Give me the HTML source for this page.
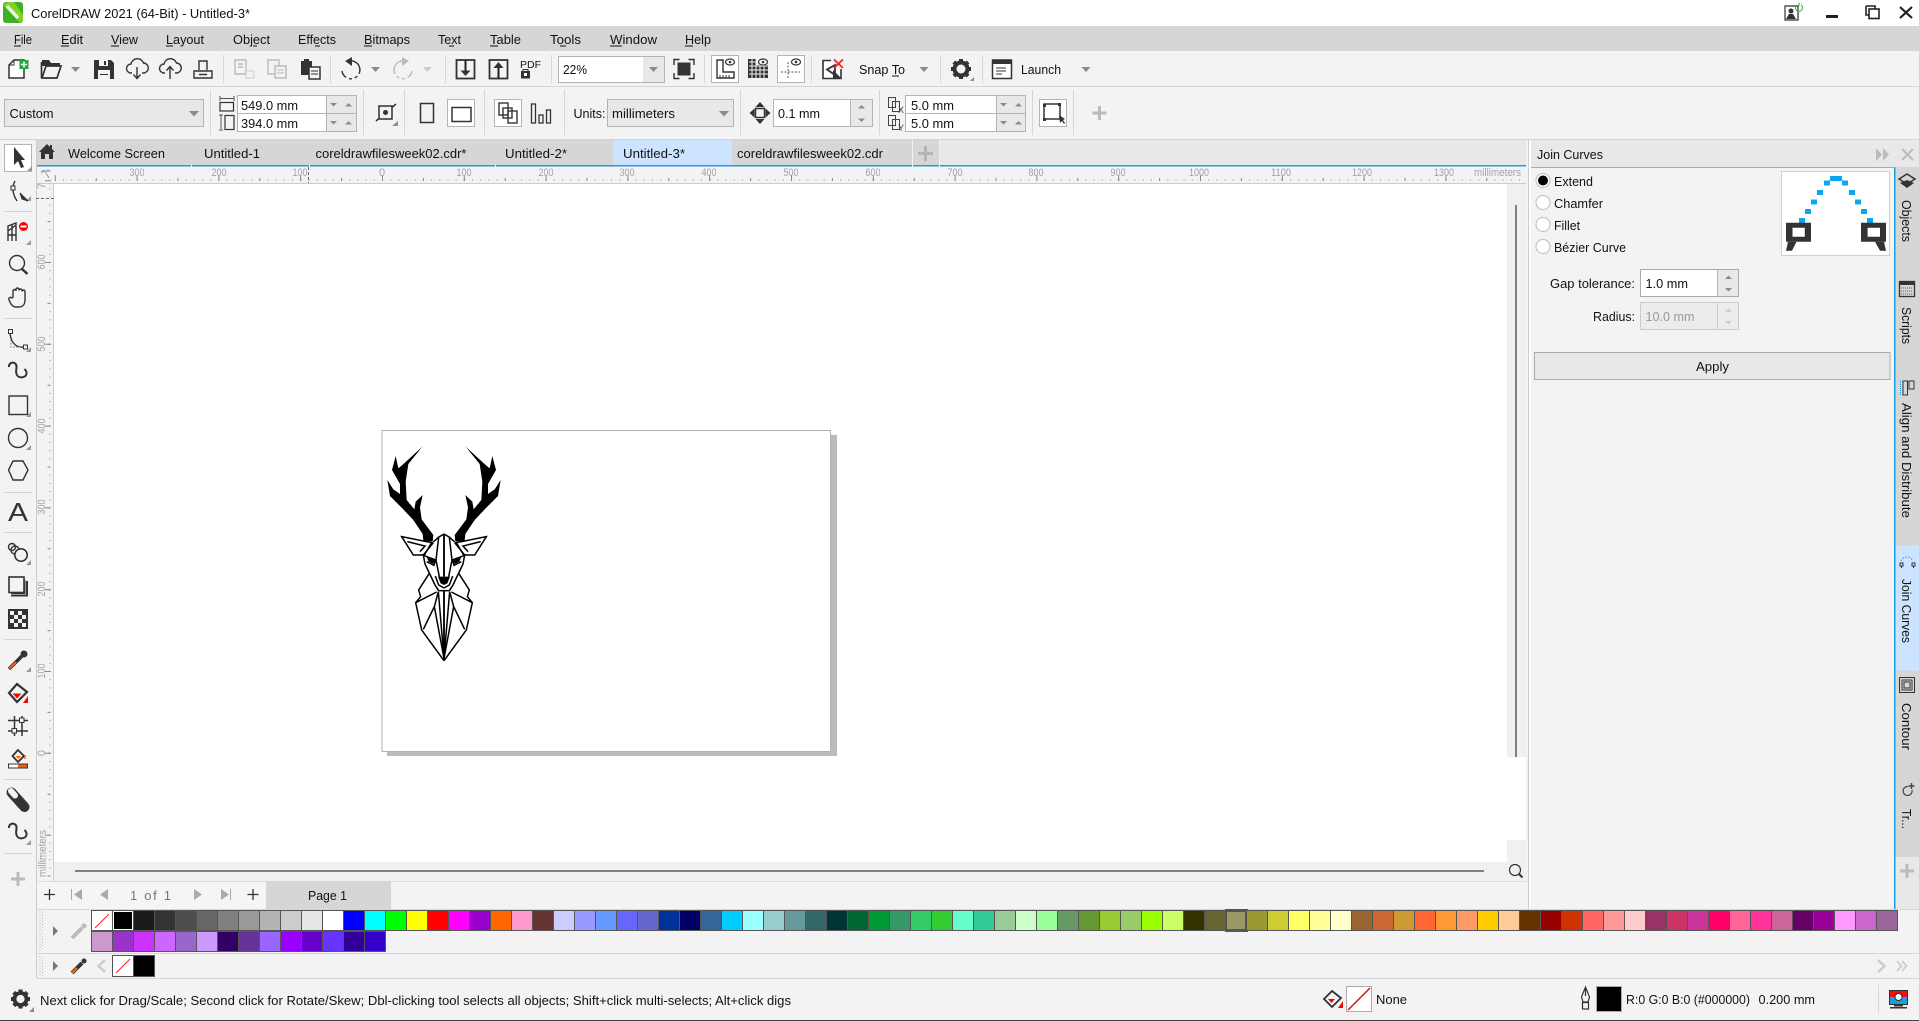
<!DOCTYPE html>
<html lang="en"><head><meta charset="utf-8"><title>CorelDRAW 2021</title>
<style>
html,body{margin:0;padding:0;background:#f3f3f3;width:1919px;height:1021px;overflow:hidden}
svg.m{position:absolute;left:0;top:0}
svg.m text{font-family:"Liberation Sans",sans-serif;font-size:13px;fill:#111}
svg.m text.r{font-size:11px;fill:#a3a3a3}
.pal{position:absolute;display:flex;border-left:1px solid #555;box-sizing:content-box}
.pal i{display:block;width:21px;height:21px;box-sizing:border-box;border:solid #555;border-width:1px 1px 1px 0;flex:none}
.s{fill:none;stroke:#333;stroke-width:1.4}
.sg{fill:none;stroke:#bbb;stroke-width:1.4}
.d{fill:#333}
.c{fill:#e8e8e8;stroke:#b4b4b4}
.w{fill:#fff;stroke:#b4b4b4}
.a{fill:#8a8a8a}
</style></head><body>
<svg class="m" width="1919" height="1021" viewBox="0 0 1919 1021" xmlns="http://www.w3.org/2000/svg">
<!-- base bands -->
<rect width="1919" height="1021" fill="#f3f3f3"/>
<rect width="1919" height="26" fill="#fff"/>
<rect y="26" width="1919" height="25" fill="#d6d6d6"/>
<rect y="86" width="1919" height="1" fill="#d6d6d6"/>
<rect y="139" width="1919" height="1" fill="#d6d6d6"/>
<rect y="1020" width="1919" height="1" fill="#444"/>

<!-- title bar -->
<rect x="3" y="2" width="20" height="21" rx="3" fill="#3fae2a"/>
<path d="M3 5 L8 2 H14 L23 15 V20 L20 23Z" fill="#7ed321"/>
<path d="M7 6 L18 18" stroke="#e8f5e0" stroke-width="3.5" fill="none"/>
<text x="31" y="18" textLength="219" lengthAdjust="spacingAndGlyphs">CorelDRAW 2021 (64-Bit) - Untitled-3*</text>
<path d="M1785 6 h13 v14 h-13z" fill="#fff" stroke="#333" stroke-width="1.200"/>
<circle cx="1791" cy="11" r="2.500" fill="#333"/><path d="M1786 19 l3 -5 h4 l3 5z" fill="#333"/>
<path d="M1797 5 a3.500 3.500 0 1 0 4 0 M1799 2.500 v3.500" fill="none" stroke="#2cab4a" stroke-width="1"/>
<rect x="1826" y="15" width="12" height="3" fill="#222"/>
<path d="M1866 6 h9 v3 M1866 6 v9 h3" fill="none" stroke="#222" stroke-width="1.600"/>
<rect x="1869" y="9" width="10" height="9.500" fill="#fff" stroke="#222" stroke-width="1.600"/>
<path d="M1900 7 L1912 18 M1912 7 L1900 18" stroke="#222" stroke-width="2.200" fill="none"/>

<!-- menu -->
<text x="14" y="44" textLength="18" lengthAdjust="spacingAndGlyphs">File</text>
<text x="61" y="44" textLength="22" lengthAdjust="spacingAndGlyphs">Edit</text>
<text x="111" y="44" textLength="27" lengthAdjust="spacingAndGlyphs">View</text>
<text x="166" y="44" textLength="38" lengthAdjust="spacingAndGlyphs">Layout</text>
<text x="233" y="44" textLength="37" lengthAdjust="spacingAndGlyphs">Object</text>
<text x="298" y="44" textLength="38" lengthAdjust="spacingAndGlyphs">Effects</text>
<text x="364" y="44" textLength="46" lengthAdjust="spacingAndGlyphs">Bitmaps</text>
<text x="438" y="44" textLength="23" lengthAdjust="spacingAndGlyphs">Text</text>
<text x="490" y="44" textLength="31" lengthAdjust="spacingAndGlyphs">Table</text>
<text x="550" y="44" textLength="31" lengthAdjust="spacingAndGlyphs">Tools</text>
<text x="610" y="44" textLength="47" lengthAdjust="spacingAndGlyphs">Window</text>
<text x="685" y="44" textLength="26" lengthAdjust="spacingAndGlyphs">Help</text>
<path d="M14 46h7M61 46h8M111 46h8M166 46h7M253 46h4M315 46h5M364 46h8M449 46h5M490 46h8M560 46h6M610 46h12M685 46h8" stroke="#111" stroke-width="1" fill="none"/>

<!-- main toolbar separators -->
<path d="M223.500 55v28M330.500 55v28M445.500 55v28M551.500 55v28M704.500 55v28M811.500 55v28M940.500 55v28M982.500 55v28" stroke="#d6d6d6" fill="none"/>
<!-- new -->
<path d="M9 78 V65 L14 60 H24 V78Z" fill="#fff" stroke="#333" stroke-width="1.500"/>
<path d="M9 65 h5 v-5" fill="none" stroke="#333"/>
<rect x="19.500" y="60" width="9" height="9" fill="#1fa83a"/><path d="M24 61.500v6M21 64.500h6" stroke="#fff" stroke-width="1.500"/>
<!-- open -->
<path d="M42 60 h7 l2 3 h9 v3 h-18z" fill="#333"/>
<path d="M41.500 78 V62 M42 78 H57 L61 66 H46 L42 78Z" fill="#f3f3f3" stroke="#333" stroke-width="1.700"/>
<path d="M71 67h9l-4.500 5z" class="a"/>
<!-- save -->
<path d="M94 60 h17 l3 3 v16 h-20z" fill="#333"/><rect x="99" y="60" width="9" height="6" fill="#f3f3f3"/><rect x="104" y="61" width="2" height="4" fill="#333"/><rect x="98" y="70" width="12" height="9" fill="#f3f3f3"/><rect x="100" y="74" width="8" height="1" fill="#333"/>
<!-- clouds -->
<path d="M132 73 h-1 a4.500 4.500 0 0 1 0 -9 a6.500 6.500 0 0 1 12.500 -1 a5 5 0 0 1 -.5 10 h-1" class="s"/>
<path d="M137 67 v11 M133.500 74.500 L137 78.500 L140.500 74.500" class="s"/>
<path d="M165 73 h-1 a4.500 4.500 0 0 1 0 -9 a6.500 6.500 0 0 1 12.500 -1 a5 5 0 0 1 -.5 10 h-1" class="s"/>
<path d="M170 79 v-12 M166.500 70.500 L170 66.500 L173.500 70.500" class="s"/>
<!-- print -->
<path d="M199 70 V61 H207 V70 M194 71 H212 V78 H194Z M199 74.500h8" class="s"/>
<!-- copy family -->
<path d="M235 60 h11 v14 h-11z M238 64h5M238 67h5" class="sg"/><rect x="246" y="71" width="8" height="7" fill="#f3f3f3" stroke="#ccc"/>
<path d="M268 60 h11 v14 h-11z" class="sg"/><rect x="275" y="66" width="11" height="12" fill="#f3f3f3" stroke="#bbb" stroke-width="1.500"/><path d="M277 70h7M277 73h7" stroke="#bbb"/>
<rect x="301" y="61" width="11" height="14" fill="#333"/><rect x="304" y="59" width="5" height="3" fill="#333"/><rect x="309" y="67" width="11" height="12" fill="#f3f3f3" stroke="#333" stroke-width="1.500"/><path d="M311 71h7M311 74h7" stroke="#333"/>
<!-- undo redo -->
<path d="M349 61 a9 9 0 1 1 -7 10" class="s" stroke-dasharray="20 3 3 3 3 3"/><path d="M352 57 L345 61 L352 66z" class="d"/>
<path d="M371 67h9l-4.500 5z" class="a"/>
<path d="M405 61 a9 9 0 1 0 7 10" class="sg" stroke-dasharray="20 3 3 3 3 3"/><path d="M402 57 L409 61 L402 66z" fill="#bbb"/>
<path d="M423 67h9l-4.500 5z" fill="#ccc"/>
<!-- import export pdf -->
<rect x="456.500" y="60" width="18" height="18.500" class="s" style="stroke-width:1.800"/><path d="M465.500 60v14" stroke="#222" stroke-width="2"/><path d="M460.500 70.500h10L465.500 76z" class="d"/>
<rect x="489.500" y="60" width="18" height="18.500" class="s" style="stroke-width:1.800"/><path d="M498.500 78v-13" stroke="#222" stroke-width="2"/><path d="M493.500 68h10L498.500 62z" class="d"/>
<text x="520" y="68" textLength="21" lengthAdjust="spacingAndGlyphs" style="font-size:10px">PDF</text>
<rect x="521" y="71" width="9" height="7.500" fill="#333"/><path d="M523 71 v-1.500 h5 v1.500" class="s" style="stroke-width:1"/><rect x="524" y="73" width="3" height="3" fill="#fff"/>
<!-- zoom combo -->
<rect x="558.500" y="56.500" width="106" height="26" fill="#e8e8e8" stroke="#b4b4b4"/><rect x="559" y="57" width="84" height="25" fill="#fff"/>
<text x="563" y="74" textLength="24" lengthAdjust="spacingAndGlyphs">22%</text>
<path d="M649 67h9l-4.500 5z" class="a"/>
<!-- fullscreen -->
<rect x="677.500" y="62.500" width="13" height="13" fill="#333"/>
<path d="M674 65 v-5.500 h5.500 M688.500 59.500 h5.500 v5.500 M694 73 v5.500 h-5.500 M679.500 78.500 h-5.500 v-5.500" class="s"/>
<!-- rulers toggle -->
<rect x="711.500" y="55.500" width="27" height="27" fill="#fff" stroke="#b4b4b4"/>
<path d="M717 60 v18 h17 v-6 h-11 v-12z" class="s"/><path d="M720 78v-3M723 78v-3M726 78v-3M729 78v-3" stroke="#333"/>
<ellipse cx="730" cy="62" rx="4.500" ry="3" fill="#fff" stroke="#333" stroke-width="1.200"/><circle cx="730" cy="62" r="1.300" class="d"/>
<!-- grid -->
<path d="M748 59 h8 v6 h12 v13 h-20z" fill="#333"/><path d="M749 62h19M749 66h19M749 70h19M749 74h19M752 59v19M756 59v19M760 65v13M764 65v13" stroke="#f3f3f3"/>
<ellipse cx="763" cy="62" rx="4.500" ry="3" fill="#fff" stroke="#333" stroke-width="1.200"/><circle cx="763" cy="62" r="1.300" class="d"/>
<!-- guides -->
<rect x="777.500" y="55.500" width="27" height="27" fill="#fff" stroke="#b4b4b4"/>
<path d="M788 62 v17 M781 72 h19" stroke="#555" stroke-dasharray="2 1.500" fill="none"/>
<ellipse cx="796" cy="62" rx="4.500" ry="3" fill="#fff" stroke="#333" stroke-width="1.200"/><circle cx="796" cy="62" r="1.300" class="d"/>
<!-- snap -->
<path d="M831 60.500 H823 V78.500 H841 V69" fill="#fff" stroke="#333" stroke-width="1.600"/>
<path d="M827 69.500 L835 65 V75z" fill="#f3f3f3" stroke="#333" stroke-width="1.800"/><path d="M833 70 L841 78 H833z" class="d"/>
<path d="M834 59.500 L843 68 M843 59.500 L834 68" stroke="#e22" stroke-width="1.800"/>
<text x="859" y="74" textLength="46" lengthAdjust="spacingAndGlyphs">Snap To</text><path d="M892 76h7" stroke="#111"/>
<path d="M919.500 67h9l-4.500 5z" class="a"/>
<!-- gear -->
<g transform="translate(961,69)"><circle r="6.500" fill="none" stroke="#333" stroke-width="4"/><path d="M-2 -10h4v3h-4zM-2 7h4v3h-4zM-10 -2h3v4h-3zM7 -2h3v4h-3z" class="d"/><path d="M-2 -10h4v3h-4zM-2 7h4v3h-4zM-10 -2h3v4h-3zM7 -2h3v4h-3z" class="d" transform="rotate(45)"/></g>
<path d="M974 81h-4l4-4z" class="a"/>
<!-- launch -->
<rect x="992.500" y="60" width="19" height="18.500" fill="#fff" stroke="#333" stroke-width="1.500"/><rect x="992" y="60" width="20" height="4" fill="#333"/><path d="M996 68h10M996 71h10M996 74h6" stroke="#333"/>
<text x="1021" y="74" textLength="40" lengthAdjust="spacingAndGlyphs">Launch</text>
<path d="M1081.500 67h9l-4.500 5z" class="a"/>

<!-- property bar -->
<path d="M210.500 90v45M363.500 90v45M404.500 90v45M484.500 90v45M564.500 90v45M740.500 90v45M879.500 90v45M1032.500 90v45M1073.500 90v45" stroke="#d6d6d6" fill="none"/>
<rect x="4.500" y="99.500" width="199" height="27" class="c"/>
<text x="9.500" y="118" textLength="44" lengthAdjust="spacingAndGlyphs">Custom</text>
<path d="M189 111h10l-5 5.500z" class="a"/>
<!-- W H icons -->
<path d="M220 98.500h14M220 96v5M234 96v5" stroke="#555" fill="none"/><rect x="220" y="102.500" width="13.500" height="8.500" fill="none" stroke="#333" stroke-width="1.200"/>
<path d="M221 115v14M219 115h4M219 130h4" stroke="#555" fill="none"/><rect x="225" y="115.500" width="9" height="14" fill="none" stroke="#333" stroke-width="1.200"/>
<rect x="237.500" y="95.500" width="119" height="18" class="c"/><rect x="238" y="96" width="88.500" height="17" fill="#fff"/>
<rect x="237.500" y="113.500" width="119" height="18" class="c"/><rect x="238" y="114" width="88.500" height="17" fill="#fff"/>
<path d="M326.500 96v36" stroke="#b4b4b4" fill="none"/>
<text x="241" y="110" textLength="57" lengthAdjust="spacingAndGlyphs">549.0 mm</text>
<text x="241" y="128" textLength="57" lengthAdjust="spacingAndGlyphs">394.0 mm</text>
<path d="M330 103h7l-3.500 3.500zM345 106.500h7l-3.500-3.500zM330 121h7l-3.500 3.500zM345 124.500h7l-3.500-3.500z" class="a"/>
<!-- unit icon -->
<path d="M376 121 L396 104" stroke="#333" stroke-width="1.500"/><rect x="379" y="106" width="13" height="13" fill="#f3f3f3" stroke="#333" stroke-width="1.500"/><circle cx="385.500" cy="112.500" r="2.500" class="d"/><path d="M398 126h-6l6-5z" class="a"/>
<rect x="420.500" y="103.500" width="13" height="19" fill="none" stroke="#333" stroke-width="1.500"/>
<rect x="447.500" y="99.500" width="27" height="27" fill="#fff" stroke="#b4b4b4"/><rect x="452" y="107.500" width="19" height="14" fill="none" stroke="#333" stroke-width="1.500"/>
<rect x="494.500" y="99.500" width="27" height="27" fill="#fff" stroke="#b4b4b4"/>
<rect x="499" y="103" width="9" height="12" fill="none" stroke="#333" stroke-width="1.400"/><rect x="508" y="111" width="9" height="12" fill="none" stroke="#333" stroke-width="1.400"/><rect x="503" y="108" width="9" height="10" fill="none" stroke="#333" stroke-width="1.400"/>
<rect x="531.500" y="104" width="4" height="19" fill="none" stroke="#333" stroke-width="1.300"/><rect x="539" y="115" width="4" height="8" fill="none" stroke="#333" stroke-width="1.300"/><rect x="546.500" y="110" width="4" height="13" fill="none" stroke="#333" stroke-width="1.300"/>
<text x="573.500" y="118" textLength="32" lengthAdjust="spacingAndGlyphs">Units:</text>
<rect x="607.500" y="99.500" width="126" height="27" class="c"/>
<text x="612" y="118" textLength="63" lengthAdjust="spacingAndGlyphs">millimeters</text>
<path d="M719 111h10l-5 5.500z" class="a"/>
<!-- nudge -->
<path d="M760 102l4.500 5h-9zM760 124l4.500-5h-9zM749.500 113l5-4.500v9zM770.500 113l-5-4.500v9z" class="d"/><rect x="755.500" y="108.500" width="9" height="9" fill="#f3f3f3" stroke="#333" stroke-width="1.500"/>
<rect x="773.500" y="99.500" width="99" height="27" class="c"/><rect x="774" y="100" width="76.500" height="26" fill="#fff"/><path d="M850.500 100v26" stroke="#b4b4b4"/>
<text x="778" y="118" textLength="42" lengthAdjust="spacingAndGlyphs">0.1 mm</text>
<path d="M858 108.500h7l-3.500-3.500zM858 118.500h7l-3.500 3.500z" class="a"/>
<!-- dup -->
<g fill="none" stroke="#444" stroke-width="1"><rect x="888.500" y="97.500" width="7" height="10"/><rect x="892.500" y="101.500" width="7" height="10"/><rect x="888.500" y="115.500" width="7" height="10"/><rect x="892.500" y="119.500" width="7" height="10"/></g>
<text x="898" y="113" style="font-size:9px;fill:#444">X</text><text x="898" y="131" style="font-size:9px;fill:#444">Y</text>
<rect x="905.500" y="95.500" width="120" height="18" class="c"/><rect x="906" y="96" width="90" height="17" fill="#fff"/>
<rect x="905.500" y="113.500" width="120" height="18" class="c"/><rect x="906" y="114" width="90" height="17" fill="#fff"/>
<path d="M996.500 96v36" stroke="#b4b4b4"/>
<text x="911" y="110" textLength="43" lengthAdjust="spacingAndGlyphs">5.0 mm</text>
<text x="911" y="128" textLength="43" lengthAdjust="spacingAndGlyphs">5.0 mm</text>
<path d="M1000 103h7l-3.500 3.500zM1015 106.500h7l-3.500-3.500zM1000 121h7l-3.500 3.500zM1015 124.500h7l-3.500-3.500z" class="a"/>
<rect x="1039.500" y="99.500" width="27" height="27" fill="#fff" stroke="#b4b4b4"/>
<rect x="1044" y="104" width="16" height="15" fill="none" stroke="#333" stroke-width="1.500"/><path d="M1043 104h3v3h-3zM1058 103h3v3h-3zM1043 118h3v3h-3z" class="d"/><path d="M1059 115l1 8 2-2 2 3 1-1-2-3 2-1z" class="d"/>
<path d="M1099.500 106v14M1092.500 113h14" stroke="#bbb" stroke-width="3"/>

<!-- tabs -->
<rect x="36" y="140" width="903" height="25" fill="#d6d6d6"/>
<rect x="939" y="140" width="587" height="25" fill="#e8e8e8"/>
<rect x="613" y="140" width="119" height="25" fill="#cce4ff"/>
<rect x="36" y="165" width="1490" height="1.500" fill="#1a9fe0"/>
<path d="M191.500 165v2M309.500 165v2M495.500 165v2M912.500 140v27M939.500 140v27" stroke="#f3f3f3" fill="none"/>
<path d="M47 144 L39 152 H41 V159 H45 V154 H49 V159 H53 V152 H55 L52 149 V145 H50 V147z" fill="#333"/>
<text x="68" y="158" textLength="97" lengthAdjust="spacingAndGlyphs">Welcome Screen</text>
<text x="204" y="158" textLength="56" lengthAdjust="spacingAndGlyphs">Untitled-1</text>
<text x="315.500" y="158" textLength="151" lengthAdjust="spacingAndGlyphs">coreldrawfilesweek02.cdr*</text>
<text x="505" y="158" textLength="62" lengthAdjust="spacingAndGlyphs">Untitled-2*</text>
<text x="623" y="158" textLength="62" lengthAdjust="spacingAndGlyphs">Untitled-3*</text>
<text x="737" y="158" textLength="146" lengthAdjust="spacingAndGlyphs">coreldrawfilesweek02.cdr</text>
<path d="M925.500 146v15M918 153.500h15" stroke="#b4b4b4" stroke-width="3"/>

<!-- ruler + canvas -->
<rect x="36" y="166.500" width="1490" height="16.500" fill="#f3f3f3"/>
<rect x="36" y="183" width="1490" height="1" fill="#ccc"/>
<rect x="54" y="184" width="1472" height="697" fill="#fff"/>
<rect x="36" y="140" width="1" height="838" fill="#ccc"/>
<rect x="53" y="183" width="1" height="698" fill="#ccc"/>
<g fill="none" stroke="#8a8a8a">
<line x1="54.800" y1="180" x2="1526" y2="180" stroke-dasharray="1 7.180"/>
<line x1="95.700" y1="179.500" x2="1526" y2="179.500" stroke-width="3" stroke-dasharray="1 39.900"/>
<line x1="54.800" y1="178" x2="1526" y2="178" stroke-width="6" stroke-dasharray="1 80.800"/>
<line x1="50" y1="180.200" x2="50" y2="881" stroke-dasharray="1 7.180" stroke-dashoffset="0"/>
<line x1="49" y1="221.100" x2="49" y2="881" stroke-width="3" stroke-dasharray="1 39.900"/>
<line x1="48" y1="180.200" x2="48" y2="881" stroke-width="6" stroke-dasharray="1 80.800"/>
</g>
<path d="M308.500 167v16" stroke="#666" stroke-dasharray="3 2" fill="none"/>
<path d="M36 198.500h18" stroke="#666" stroke-dasharray="3 2" fill="none"/>
<path d="M41 171h10M44 170l5 8M43 170v2M41 173l3-2M48 169v3" stroke="#999" fill="none"/>
<g text-anchor="middle">
<text class="r" x="137" y="176" textLength="15" lengthAdjust="spacingAndGlyphs">300</text>
<text class="r" x="219" y="176" textLength="15" lengthAdjust="spacingAndGlyphs">200</text>
<text class="r" x="300" y="176" textLength="15" lengthAdjust="spacingAndGlyphs">100</text>
<text class="r" x="382" y="176">0</text>
<text class="r" x="464" y="176" textLength="15" lengthAdjust="spacingAndGlyphs">100</text>
<text class="r" x="546" y="176" textLength="15" lengthAdjust="spacingAndGlyphs">200</text>
<text class="r" x="627" y="176" textLength="15" lengthAdjust="spacingAndGlyphs">300</text>
<text class="r" x="709" y="176" textLength="15" lengthAdjust="spacingAndGlyphs">400</text>
<text class="r" x="791" y="176" textLength="15" lengthAdjust="spacingAndGlyphs">500</text>
<text class="r" x="873" y="176" textLength="15" lengthAdjust="spacingAndGlyphs">600</text>
<text class="r" x="955" y="176" textLength="15" lengthAdjust="spacingAndGlyphs">700</text>
<text class="r" x="1036" y="176" textLength="15" lengthAdjust="spacingAndGlyphs">800</text>
<text class="r" x="1118" y="176" textLength="15" lengthAdjust="spacingAndGlyphs">900</text>
<text class="r" x="1199" y="176" textLength="20" lengthAdjust="spacingAndGlyphs">1000</text>
<text class="r" x="1281" y="176" textLength="20" lengthAdjust="spacingAndGlyphs">1100</text>
<text class="r" x="1362" y="176" textLength="20" lengthAdjust="spacingAndGlyphs">1200</text>
<text class="r" x="1444" y="176" textLength="20" lengthAdjust="spacingAndGlyphs">1300</text>
<text class="r" transform="translate(45,262) rotate(-90)" textLength="15" lengthAdjust="spacingAndGlyphs">600</text>
<text class="r" transform="translate(45,344) rotate(-90)" textLength="15" lengthAdjust="spacingAndGlyphs">500</text>
<text class="r" transform="translate(45,426) rotate(-90)" textLength="15" lengthAdjust="spacingAndGlyphs">400</text>
<text class="r" transform="translate(45,507) rotate(-90)" textLength="15" lengthAdjust="spacingAndGlyphs">300</text>
<text class="r" transform="translate(45,589) rotate(-90)" textLength="15" lengthAdjust="spacingAndGlyphs">200</text>
<text class="r" transform="translate(45,671) rotate(-90)" textLength="15" lengthAdjust="spacingAndGlyphs">100</text>
<text class="r" transform="translate(45,753) rotate(-90)">0</text>
</g>
<text class="r" transform="translate(45,189) rotate(-90)">7</text>
<text class="r" x="1474" y="176" textLength="47" lengthAdjust="spacingAndGlyphs">millimeters</text>
<text class="r" transform="translate(46,877) rotate(-90)" textLength="47" lengthAdjust="spacingAndGlyphs">millimeters</text>

<!-- scrollbars -->
<rect x="1507" y="184" width="19" height="573" fill="#f0f0f0"/>
<rect x="1515" y="205" width="2" height="552" fill="#808080"/>
<rect x="1507" y="840" width="19" height="41" fill="#f0f0f0"/>
<rect x="54" y="862" width="1453" height="19" fill="#f0f0f0"/>
<rect x="75" y="870" width="1409" height="2" fill="#808080"/>
<circle cx="1515" cy="870" r="5.500" fill="#f3f3f3" stroke="#333" stroke-width="1.200"/><path d="M1513 868h.1M1517 868h.1M1515 870h.1M1513 872h.1M1517 872h.1" stroke="#333" stroke-width="1.500"/><path d="M1519 874l3.500 3.500" stroke="#333" stroke-width="2"/>
<!-- divider -->
<rect x="1526" y="140" width="2" height="769" fill="#f3f3f3"/>
<rect x="1528" y="140" width="1" height="769" fill="#ccc"/>
<rect x="1529" y="140" width="2" height="769" fill="#fff"/>

<!-- page -->
<rect x="387" y="435" width="450" height="321" fill="#bbb"/>
<rect x="382" y="430.500" width="448.500" height="321" fill="#fff" stroke="#b0b0b0"/>
<!-- deer -->
<g transform="translate(370,420) scale(.33333)">
<g id="h">
<path d="M157 80 L115 132 L107 185 L110 240 L133 268 L137 245 L158 225 L150 262 L155 298 L190 345 L188 365 L160 362 L158 342 L130 300 L100 268 L60 228 L52 180 L70 208 L90 222 L90 192 L66 150 L77 108 L85 145 L105 128Z" fill="#000"/>
<g fill="none" stroke="#000" stroke-width="4.500" stroke-linejoin="miter">
<path d="M95 350 L185 368 L163 405 L130 405Z"/>
<path d="M112 365 L165 378 L150 395"/>
<path d="M190 366 L205 352 L222 342"/>
<path d="M206 352 L198 420 L208 470"/>
<path d="M190 368 L160 405 L165 432 L195 495 L206 512"/>
<path d="M163 407 L197 420 L192 436 L170 425"/>
<path d="M196 468 L206 495 L222 504"/>
<path d="M206 512 H222"/>
<path d="M178 460 L146 510 L152 530 L137 548 L155 630 L222 722"/>
<path d="M137 548 L200 516"/>
<path d="M205 515 L222 715"/>
<path d="M160 628 L193 560 L222 715"/>
<path d="M193 560 L205 515"/>
</g>
<path d="M170 411 L195 422 L190 432 L176 425Z" fill="#000"/>
</g>
<use href="#h" transform="matrix(-1 0 0 1 444 0)"/>
<path d="M222 344 V470 M222 510 V722" stroke="#000" stroke-width="5.500" fill="none"/>
<path d="M204 470 L240 470 L232 490 L222 495 L212 490Z" fill="#000"/>
</g>

<!-- tool column -->
<rect x="4.500" y="144.500" width="27" height="27" fill="#fff" stroke="#b4b4b4"/>
<path d="M14 147 L25 160 L21 160 L24 167 L21 168 L18 161 L14 165Z" fill="#333"/>
<g fill="#999"><path d="M32 171h-5l5-5z"/><path d="M31 201h-5l5-5z"/><path d="M31 245h-5l5-5z"/><path d="M31 352h-5l5-5z"/><path d="M31 417h-5l5-5z"/><path d="M31 450h-5l5-5z"/><path d="M31 565h-5l5-5z"/><path d="M31 672h-5l5-5z"/><path d="M31 845h-5l5-5z"/></g>
<path d="M4 211.500h28M4 318.500h28M4 492.500h28M4 532.500h28M4 639.500h28M4 779.500h28M4 853.500h28" stroke="#d6d6d6" fill="none"/>
<!-- shape -->
<path d="M15 181 Q10 190 17 201" class="s"/><rect x="11" y="186" width="4" height="4" fill="#f3f3f3" stroke="#333"/><path d="M20 193 L28 201 L22 199z" class="d" stroke="#333"/>
<!-- crop -->
<path d="M8 241 V226 L16 223 V241 M12 241 V225 M8 231 L16 225 M8 235h8" class="s"/><circle cx="23.500" cy="226.500" r="4.500" fill="#f00"/><rect x="20.500" y="225.500" width="6" height="2" fill="#fff"/>
<!-- zoom -->
<circle cx="17" cy="263" r="7.500" class="s"/><path d="M22 269 L27.500 274" stroke="#333" stroke-width="2.500"/>
<!-- hand -->
<path d="M13 297 v-6 a1.300 1.300 0 0 1 3 0 v-1.500 a1.300 1.300 0 0 1 3 0 v1 a1.300 1.300 0 0 1 3 0 v1 a1.300 1.300 0 0 1 3 0 V300 c0 4 -2 7 -6 7 h-3 c-3 0 -4 -2 -5 -3 l-2 -4 c-1 -3 2 -3 3 -2z" class="s"/>
<!-- curve -->
<path d="M10 333 C11 345 18 348 25 347" class="s"/><path d="M11 340 V347 H22" fill="none" stroke="#777" stroke-dasharray="1.500 1.500"/><rect x="8.500" y="329.500" width="4" height="4" fill="#f3f3f3" stroke="#333"/><rect x="23.500" y="345" width="4" height="4" fill="#f3f3f3" stroke="#333"/>
<!-- artistic -->
<path d="M9 367 a3.800 3.800 0 1 1 7.500 0 c0 3 -1 4 0 7 c1.500 5 9 4 10 0 c.5 -2 -1 -4 -2 -5" class="s" style="stroke-width:2"/>
<!-- rect ellipse poly -->
<rect x="9" y="396" width="18.500" height="18.500" class="s"/>
<circle cx="18" cy="438" r="9.500" class="s"/>
<path d="M13 461 H23 L28 470 L23 480 H13 L8.500 470Z" class="s"/>
<!-- A -->
<text x="8" y="521" style="font-size:26px;fill:#333" textLength="20" lengthAdjust="spacingAndGlyphs">A</text>
<!-- blend -->
<circle cx="12" cy="547" r="3.500" class="s"/><circle cx="15" cy="550" r="4" class="s"/><circle cx="21" cy="555" r="6.200" fill="#f3f3f3" stroke="#333" stroke-width="1.600"/>
<!-- shadow -->
<rect x="11" y="581" width="17" height="15.500" fill="#333"/><rect x="9" y="577" width="15" height="15.500" fill="#f3f3f3" stroke="#333" stroke-width="1.600"/><path d="M11 594.500h14.500v-15" stroke="#999" fill="none"/>
<!-- transparency -->
<rect x="8" y="609" width="20" height="20" fill="#333"/>
<g fill="#f3f3f3"><rect x="10" y="611" width="4" height="4"/><rect x="18" y="611" width="4" height="4"/><rect x="14" y="615" width="4" height="4"/><rect x="22" y="615" width="4" height="4"/><rect x="10" y="619" width="4" height="4"/><rect x="18" y="619" width="4" height="4"/><rect x="14" y="623" width="4" height="4"/><rect x="22" y="623" width="4" height="4"/></g>
<!-- dropper -->
<path d="M9 669 L22 656" stroke="#333" stroke-width="3.500"/><path d="M9.500 668.500 L16 662" stroke="#e8631a" stroke-width="2"/><circle cx="24" cy="654" r="3.500" class="d"/>
<!-- fill -->
<path d="M17 684 L9 693 L17 702 L27 692Z" fill="#f3f3f3" stroke="#333" stroke-width="2.200"/><path d="M12.500 693.500 h9 l-4.500 5z" fill="#f00"/><path d="M28 696 V703 H23z" fill="#f00"/>
<!-- mesh -->
<path d="M8 720.500h20M8 731h20M14.500 716v20M22 716v20" stroke="#333" stroke-width="1.500"/><rect x="19.500" y="718" width="4.500" height="4.500" fill="#f3f3f3" stroke="#333"/><rect x="12" y="728.500" width="4.500" height="4.500" fill="#f3f3f3" stroke="#333"/>
<!-- smart fill -->
<path d="M18 750 L12.500 756 L18 762 L24 756Z" fill="#f3f3f3" stroke="#333" stroke-width="1.800"/><path d="M15.500 756h5.500l-2.500 3z" fill="#f60"/><path d="M25 755v4" stroke="#f60" stroke-width="1.500"/>
<rect x="8.500" y="764" width="19" height="4" fill="#fff" stroke="#333"/><rect x="18" y="764.500" width="9" height="3" fill="#e8631a"/>
<!-- pill -->
<path d="M11.500 792.500 L24.500 807" stroke="#333" stroke-width="10" stroke-linecap="round"/><path d="M11 791 L15 795.500" stroke="#f3f3f3" stroke-width="6" stroke-linecap="round"/>
<!-- connector -->
<path d="M9 828 a3.800 3.800 0 1 1 7.500 0 c0 3 -1 4 0 7 c1.500 5 9 4 10 0 c.5 -2 -1 -4 -2 -5" class="s" style="stroke-width:2"/>
<path d="M18 872v14M11 879h14" stroke="#bbb" stroke-width="3"/>

<!-- page bar -->
<path d="M37 881.500h1490" stroke="#ddd" fill="none"/>
<rect x="37" y="882" width="229" height="27" fill="#f5f5f5"/>
<rect x="266" y="881" width="125" height="28" fill="#d6d6d6"/>
<path d="M49.500 889v11M44 894.500h11M253 889v11M247.500 894.500h11" stroke="#333" stroke-width="1.300"/>
<path d="M71.500 889v11" stroke="#aaa"/><path d="M82 889v11l-8-5.500z" fill="#aaa"/>
<path d="M108 889v11l-8-5.500z" fill="#aaa"/>
<path d="M194 889v11l8-5.500z" fill="#aaa"/>
<path d="M221 889v11l8-5.500z" fill="#aaa"/><path d="M230.500 889v11" stroke="#aaa"/>
<text x="130" y="900" textLength="41" lengthAdjust="spacing" style="fill:#777">1 of 1</text>
<text x="308" y="900" textLength="39" lengthAdjust="spacingAndGlyphs">Page 1</text>

<!-- palette chrome -->
<path d="M37 909.500h1882" stroke="#d6d6d6" fill="none"/>
<path d="M37 953.500h1882M37 978.500h1882" stroke="#d6d6d6" fill="none"/>
<path d="M40 911v40M42.500 912v39M40 956v20M42.500 957v19" stroke="#bbb" stroke-dasharray="1 2" fill="none"/>
<path d="M53 926v10l5-5zM53 961v10l5-5z" fill="#777"/>
<path d="M72 938 L82 928" stroke="#bbb" stroke-width="4"/><circle cx="84" cy="926" r="2.500" fill="#bbb"/>
<path d="M72 973 L82 963" stroke="#333" stroke-width="4"/><path d="M72 973 L77 968" stroke="#e8631a" stroke-width="2.500"/><circle cx="84" cy="961" r="2.500" class="d"/>
<path d="M105 960 L98.500 966 L105 972" fill="none" stroke="#ccc" stroke-width="2.500"/>
<path d="M1878 960 L1884.500 966 L1878 972" fill="none" stroke="#ccc" stroke-width="2.500"/>
<path d="M1897 961 L1901.500 966 L1897 971 M1902 961 L1906.500 966 L1902 971" fill="none" stroke="#ccc" stroke-width="1.700"/>
<rect x="112.500" y="955.500" width="21" height="21" fill="#fff" stroke="#555"/><path d="M116 973 L130 959" stroke="#f22"/>
<rect x="133.500" y="955.500" width="21" height="21" fill="#000" stroke="#555"/>

<!-- status bar -->
<g transform="translate(20.500,999)"><circle r="6" fill="none" stroke="#333" stroke-width="3.800"/><path d="M-2 -9.500h4v3h-4zM-2 6.500h4v3h-4zM-9.500 -2h3v4h-3zM6.500 -2h3v4h-3z" class="d"/><path d="M-2 -9.500h4v3h-4zM-2 6.500h4v3h-4zM-9.500 -2h3v4h-3zM6.500 -2h3v4h-3z" class="d" transform="rotate(45)"/></g>
<path d="M34 1012h-5l5-5z" class="a"/>
<text x="40" y="1005" textLength="751" lengthAdjust="spacingAndGlyphs">Next click for Drag/Scale; Second click for Rotate/Skew; Dbl-clicking tool selects all objects; Shift+click multi-selects; Alt+click digs</text>
<path d="M1332 991 L1324 999 L1332 1007 L1341 998Z" fill="#f3f3f3" stroke="#333" stroke-width="1.800"/><path d="M1328 999h7l-3.500 4z" fill="#f00"/><path d="M1343 1001v7h-5z" fill="#f00"/>
<rect x="1346.500" y="986.500" width="25" height="25" fill="#fff" stroke="#aaa"/><path d="M1348 1010 L1370 988" stroke="#d11" stroke-width="1.500"/>
<text x="1376" y="1004" textLength="31" lengthAdjust="spacingAndGlyphs">None</text>
<path d="M1585.500 987 L1581.500 997 L1583 1002 H1588 L1589.500 997Z M1585.500 987 V996 M1582.500 1002.500 H1588.500 V1009 H1582.500Z" fill="none" stroke="#333" stroke-width="1.200"/>
<rect x="1596.500" y="986.500" width="25" height="25" fill="#000" stroke="#aaa"/>
<text x="1626" y="1004" textLength="124" lengthAdjust="spacingAndGlyphs">R:0 G:0 B:0 (#000000)</text>
<text x="1758.500" y="1004" textLength="56.500" lengthAdjust="spacingAndGlyphs">0.200 mm</text>
<path d="M1878.500 985v28" stroke="#d6d6d6" fill="none"/>
<rect x="1889.500" y="990.500" width="18" height="14" fill="#1a9fe0" stroke="#333"/><rect x="1890" y="991" width="17" height="6" fill="#e11"/><circle cx="1898.500" cy="997" r="3.500" fill="#fff" stroke="#333"/><rect x="1894" y="1005" width="9" height="1.500" fill="#333"/><rect x="1890" y="1007" width="17" height="1.500" fill="#333"/>

<!-- side tabs -->
<rect x="1895" y="167" width="24" height="690" fill="#d6d6d6"/>
<rect x="1895" y="857" width="24" height="52" fill="#e8e8e8"/>
<rect x="1895" y="545.500" width="24" height="125" fill="#cce4ff"/>
<rect x="1894" y="167" width="1.500" height="742" fill="#1a9fe0"/>
<!-- right panel -->
<rect x="1531" y="140" width="388" height="27" fill="#e8e8e8"/>
<rect x="1531" y="167" width="364" height="1" fill="#aaa"/>
<text x="1537" y="159" textLength="66" lengthAdjust="spacingAndGlyphs">Join Curves</text>
<path d="M1876 148v13l6-6.500zM1883 148v13l6-6.500z" fill="#bbb"/>
<path d="M1902 149 L1913 160 M1913 149 L1902 160" stroke="#bbb" stroke-width="2"/>
<g fill="#fff" stroke="#bbb"><circle cx="1543" cy="180.500" r="7"/><circle cx="1543" cy="202.500" r="7"/><circle cx="1543" cy="224.500" r="7"/><circle cx="1543" cy="246.500" r="7"/></g>
<circle cx="1543" cy="180.500" r="5" fill="#000"/>
<text x="1554" y="186" textLength="39" lengthAdjust="spacingAndGlyphs">Extend</text>
<text x="1554" y="208" textLength="49" lengthAdjust="spacingAndGlyphs">Chamfer</text>
<text x="1554" y="230" textLength="26" lengthAdjust="spacingAndGlyphs">Fillet</text>
<text x="1554" y="252" textLength="72" lengthAdjust="spacingAndGlyphs">Bézier Curve</text>
<rect x="1781.500" y="171.500" width="108" height="84" fill="#fff" stroke="#d0d0d0"/>
<g fill="#0aa7f0">
<rect x="1830" y="176" width="12" height="5"/><rect x="1824" y="180.500" width="6" height="5"/><rect x="1842" y="180.500" width="6" height="5"/>
<rect x="1817" y="190" width="6" height="5"/><rect x="1849" y="190" width="6" height="5"/><rect x="1811" y="199.500" width="6" height="5"/><rect x="1855" y="199.500" width="6" height="5"/><rect x="1805" y="209" width="6" height="5"/><rect x="1861" y="209" width="6" height="5"/><rect x="1799" y="218" width="6" height="5"/><rect x="1867" y="218" width="6" height="5"/>
</g>
<path d="M1786 222.700 H1811 V241.700 H1786Z M1792.500 227.700 V236.700 H1804.800 V227.700Z" fill="#333" fill-rule="evenodd"/>
<path d="M1788 241.700 H1796.500 L1792 250.700 H1786Z" fill="#333"/>
<path d="M1861 222.700 H1886 V241.700 H1861Z M1867.600 227.700 V236.700 H1880 V227.700Z" fill="#333" fill-rule="evenodd"/>
<path d="M1875 241.700 H1884 L1886 250.700 H1880Z" fill="#333"/>
<text x="1550" y="288" textLength="85" lengthAdjust="spacingAndGlyphs">Gap tolerance:</text>
<rect x="1640.500" y="269.500" width="98" height="27" fill="#e8e8e8" stroke="#aaa"/><rect x="1641" y="270" width="76" height="26" fill="#fff"/><path d="M1717.500 270v26" stroke="#b4b4b4"/>
<text x="1645.500" y="288" textLength="42.500" lengthAdjust="spacingAndGlyphs">1.0 mm</text>
<path d="M1725 279h7l-3.500-3.500zM1725 288h7l-3.500 3.500z" class="a"/>
<text x="1593" y="321" textLength="42" lengthAdjust="spacingAndGlyphs">Radius:</text>
<rect x="1640.500" y="302.500" width="98" height="27" fill="#ececec" stroke="#ccc"/><path d="M1717.500 303v26" stroke="#ccc"/>
<text x="1645.500" y="321" textLength="49" lengthAdjust="spacingAndGlyphs" style="fill:#999">10.0 mm</text>
<path d="M1725 312h7l-3.500-3.500zM1725 321h7l-3.500 3.500z" fill="#ccc"/>
<rect x="1534.500" y="352.500" width="355.500" height="27" fill="#e8e8e8" stroke="#aaa"/>
<text x="1696" y="371" textLength="33" lengthAdjust="spacingAndGlyphs">Apply</text>
<g>
<text transform="translate(1902,200) rotate(90)" textLength="42" lengthAdjust="spacingAndGlyphs">Objects</text>
<text transform="translate(1902,307) rotate(90)" textLength="37" lengthAdjust="spacingAndGlyphs">Scripts</text>
<text transform="translate(1902,403) rotate(90)" textLength="115" lengthAdjust="spacingAndGlyphs">Align and Distribute</text>
<text transform="translate(1902,579) rotate(90)" textLength="64" lengthAdjust="spacingAndGlyphs">Join Curves</text>
<text transform="translate(1902,703) rotate(90)" textLength="47" lengthAdjust="spacingAndGlyphs">Contour</text>
<text transform="translate(1902,809) rotate(90)" textLength="20" lengthAdjust="spacingAndGlyphs">Tr...</text>
</g>
<path d="M1907 174 L1915 179 L1907 184 L1899 179Z" fill="#d6d6d6" stroke="#333" stroke-width="1.500"/><path d="M1900 183 L1907 188 L1914 183 L1907 180Z" fill="#333"/>
<rect x="1899.500" y="281.500" width="15" height="15" fill="none" stroke="#333" stroke-width="1.300"/><rect x="1899" y="281" width="16" height="4" fill="#333"/><path d="M1901 288h12M1901 291h12M1901 294h12" stroke="#555" stroke-dasharray="1 1"/>
<path d="M1900.500 380v15" stroke="#1a9fe0" stroke-dasharray="1 1"/><rect x="1903" y="381" width="4.500" height="14" fill="none" stroke="#333"/><rect x="1909" y="381" width="5" height="8" fill="none" stroke="#333"/>
<path d="M1901 561 a6.500 6.500 0 0 1 12 0" fill="none" stroke="#0aa7f0" stroke-dasharray="1.500 1.500"/><rect x="1900" y="563" width="3" height="3" fill="#cce4ff" stroke="#333"/><rect x="1912" y="563" width="3" height="3" fill="#cce4ff" stroke="#333"/><path d="M1901.500 566v2M1913.500 566v2" stroke="#333"/>
<rect x="1899.500" y="677.500" width="15" height="15" fill="none" stroke="#333" stroke-width="1"/><rect x="1902" y="680" width="10" height="10" fill="none" stroke="#333" stroke-width="1"/><rect x="1904" y="682" width="6" height="6" fill="none" stroke="#333" stroke-width="1"/>
<path d="M1912 790 a4.500 4.500 0 1 1 -4 -3.500" fill="none" stroke="#444" stroke-width="1.200"/><path d="M1911.500 783v6M1908.500 786h6" stroke="#444" stroke-width="1.500"/>
<path d="M1907 864v14M1900 871h14" stroke="#bbb" stroke-width="3"/>
</svg>

<div class="pal" style="left:91px;top:910px">
<i style="background:#fff;position:relative"><svg width="19" height="19" style="position:absolute;left:0;top:0"><path d="M3 17 L17 3" stroke="#f22" fill="none"/></svg></i><i style="background:#000;box-shadow:inset 0 0 0 1px #fff"></i><i style="background:#1a1a1a"></i><i style="background:#333"></i><i style="background:#4d4d4d"></i><i style="background:#666"></i><i style="background:#808080"></i><i style="background:#999"></i><i style="background:#b3b3b3"></i><i style="background:#ccc"></i><i style="background:#e5e5e5"></i><i style="background:#fff"></i><i style="background:#00f"></i><i style="background:#0ff"></i><i style="background:#0f0"></i><i style="background:#ff0"></i><i style="background:#f00"></i><i style="background:#f0f"></i><i style="background:#90c"></i><i style="background:#f60"></i><i style="background:#f9c"></i><i style="background:#633"></i><i style="background:#ccf"></i><i style="background:#99f"></i><i style="background:#69f"></i><i style="background:#66f"></i><i style="background:#66c"></i><i style="background:#039"></i><i style="background:#006"></i><i style="background:#369"></i><i style="background:#0cf"></i><i style="background:#9ff"></i><i style="background:#9cc"></i><i style="background:#699"></i><i style="background:#366"></i><i style="background:#033"></i><i style="background:#063"></i><i style="background:#093"></i><i style="background:#396"></i><i style="background:#3c6"></i><i style="background:#3c3"></i><i style="background:#6fc"></i><i style="background:#3c9"></i><i style="background:#9c9"></i><i style="background:#cfc"></i><i style="background:#9f9"></i><i style="background:#696"></i><i style="background:#693"></i><i style="background:#9c3"></i><i style="background:#9c6"></i><i style="background:#9f0"></i><i style="background:#cf6"></i><i style="background:#330"></i><i style="background:#663"></i><i style="background:#996;box-shadow:0 0 0 1px #555 inset,0 0 0 1px #555"></i><i style="background:#993"></i><i style="background:#cc3"></i><i style="background:#ff6"></i><i style="background:#ff9"></i><i style="background:#ffc"></i><i style="background:#963"></i><i style="background:#c63"></i><i style="background:#c93"></i><i style="background:#f63"></i><i style="background:#f93"></i><i style="background:#f96"></i><i style="background:#fc0"></i><i style="background:#fc9"></i><i style="background:#630"></i><i style="background:#900"></i><i style="background:#c30"></i><i style="background:#f66"></i><i style="background:#f99"></i><i style="background:#fcc"></i><i style="background:#936"></i><i style="background:#c36"></i><i style="background:#c39"></i><i style="background:#f06"></i><i style="background:#f69"></i><i style="background:#f39"></i><i style="background:#c69"></i><i style="background:#606"></i><i style="background:#909"></i><i style="background:#f9f"></i><i style="background:#c6c"></i><i style="background:#969"></i>
</div>
<div class="pal" style="left:91px;top:931px">
<i style="background:#c9c"></i><i style="background:#93c"></i><i style="background:#c3f"></i><i style="background:#c6f"></i><i style="background:#96c"></i><i style="background:#c9f"></i><i style="background:#306"></i><i style="background:#639"></i><i style="background:#96f"></i><i style="background:#90f"></i><i style="background:#60c"></i><i style="background:#63f"></i><i style="background:#309"></i><i style="background:#30c"></i>
</div>
</body></html>
